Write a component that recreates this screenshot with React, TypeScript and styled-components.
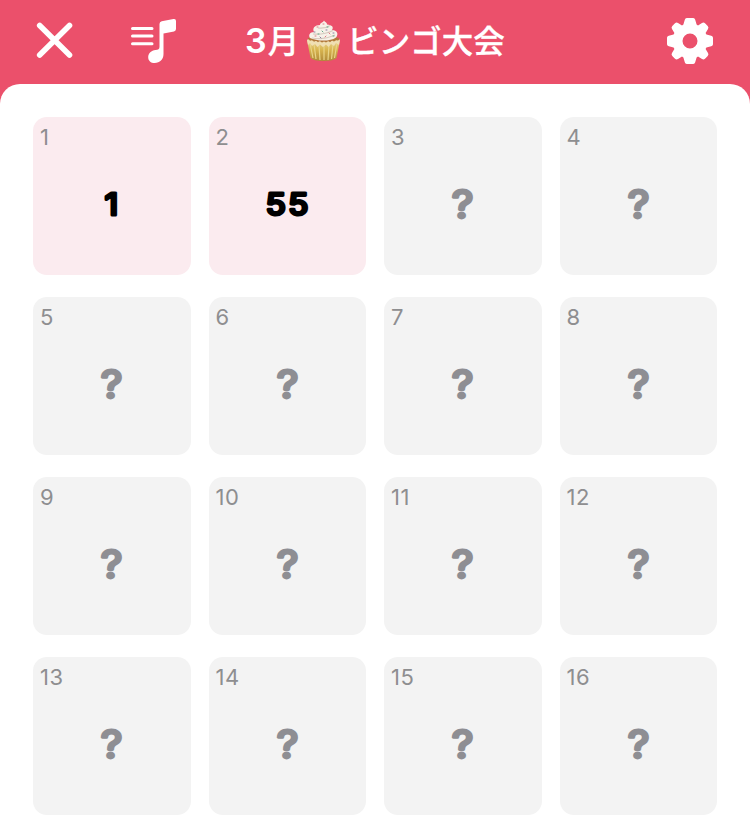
import React from "react";
import styled, { createGlobalStyle } from "styled-components";

const GlobalStyle = createGlobalStyle`
  * { box-sizing: border-box; }
  body { margin: 0; background: #fff; font-family: Inter, "Noto Sans CJK JP", sans-serif; }
`;
const Screen = styled.main`
  height: 837px;
  overflow: hidden;
  background: #eb506b;
`;
const Header = styled.header`
  height: 84px;
  padding: 0 36px 2px 34px;
  display: grid;
  grid-template-columns: 42px 46px 1fr 48px;
  column-gap: 54px;
  align-items: center;
`;
const IconButton = styled.button`
  display: flex;
  border: 0;
  padding: 0;
  background: none;
  color: #fff;
`;
const Title = styled.h1`
  margin: 0 0 0 15px;
  display: flex;
  align-items: center;
  height: 48px;
  color: #fff;
  font-weight: 600;
  line-height: 48px;
  white-space: nowrap;
`;
const Latin = styled.span`
  font-size: 34px;
  font-weight: 600;
  margin-right: 1px;
`;
const Kana = styled.span`
  padding-top: 1px;
  font-size: 31.5px;
  font-weight: 500;
  -webkit-text-stroke: 0.3px currentColor;
`;
const Cupcake = styled.svg`
  flex: none;
  margin: 0 6px 1px 7px;
`;
const Sheet = styled.section`
  height: 753px;
  padding: 33px;
  border-radius: 20px 20px 0 0;
  background: #fff;
`;
const Grid = styled.div`
  display: grid;
  grid-template-columns: repeat(4, 157.5px);
  grid-auto-rows: 158px;
  gap: 22px 18px;
`;
const Cell = styled.div<{ $drawn: boolean }>`
  display: grid;
  grid-template-rows: 40px 94px 24px;
  border-radius: 14px;
  background: ${(p) => (p.$drawn ? "#fbebef" : "#f3f3f3")};
`;
const Order = styled.span`
  padding: 6px 0 0 7px;
  color: #8e8e90;
  font-size: 22px;
  letter-spacing: 0.5px;
  line-height: 28px;
`;
const RoundedValue = styled.svg<{ $drawn: boolean }>`
  width: 100%;
  height: 94px;
  fill: ${(p) => (p.$drawn ? "#000" : "#8e8e93")};
  stroke: ${(p) => (p.$drawn ? "#000" : "#8e8e93")};
  stroke-width: ${(p) => (p.$drawn ? 3.2 : 3)}px;
  stroke-linejoin: round;
  font-size: ${(p) => (p.$drawn ? 29.5 : 38.5)}px;
  font-weight: 400;
  text-anchor: middle;
`;

const CloseIcon = () => (
  <svg width="42" height="42" viewBox="34 20 42 42" fill="none" stroke="#fff" strokeWidth="5.6" strokeLinecap="round">
    <path d="M39.7 25.5 69.5 55M69.5 25.5 39.7 55" />
  </svg>
);
const MusicIcon = () => (
  <svg width="46" height="46" viewBox="130 18 46 46" fill="#fff">
    <path d="M132.5 28.5H152M132.5 36H152M132.5 43.8H152" stroke="#fff" strokeWidth="3" strokeLinecap="round" />
    <path d="M159.5 24Q159.5 21.7 161.7 21.2L173.5 19.1Q176 18.7 176 21V29Q176 31 174 31.4L163.5 33.4V54C163.5 59.5 159.8 63 154.7 63C150.8 63 148.2 60.7 148.2 57.2C148.2 53 151.4 50.6 155.5 50C158.3 49.6 159.5 49.1 159.5 46.7Z" />
  </svg>
);
const GearIcon = () => (
  <svg width="48" height="48" viewBox="-24 -24 48 48" fill="#fff">
    <path
      fillRule="evenodd"
      d="M-3.2-23H3.2Q4.8-23 5.2-21.2L6.6-16.4 8-15.6 12-18Q13.7-19 15-17.7L17.7-15Q19-13.7 18-12L15.6-8 16.4-6.6 21.2-5.2Q23-4.8 23-3.2V3.2Q23 4.8 21.2 5.2L16.4 6.6 15.6 8 18 12Q19 13.7 17.7 15L15 17.7Q13.7 19 12 18L8 15.6 6.6 16.4 5.2 21.2Q4.8 23 3.2 23H-3.2Q-4.8 23-5.2 21.2L-6.6 16.4-8 15.6-12 18Q-13.7 19-15 17.7L-17.7 15Q-19 13.7-18 12L-15.6 8-16.4 6.6-21.2 5.2Q-23 4.8-23 3.2V-3.2Q-23-4.8-21.2-5.2L-16.4-6.6-15.6-8-18-12Q-19-13.7-17.7-15L-15-17.7Q-13.7-19-12-18L-8-15.6-6.6-16.4-5.2-21.2Q-4.8-23-3.2-23ZM0-7.5A7.5 7.5 0 1 0 0 7.5A7.5 7.5 0 1 0 0-7.5Z"
    />
  </svg>
);
const CupcakeIcon = () => (
  <Cupcake width="35" height="42" viewBox="0 0 35 42">
    <defs>
      <linearGradient id="cup" x2="0" y2="1">
        <stop stopColor="#e9d59b" />
        <stop offset=".45" stopColor="#d9b650" />
        <stop offset="1" stopColor="#b08a3a" />
      </linearGradient>
    </defs>
    <path d="M2 18Q17 13 33 18L32 24H3Z" fill="#b2793c" />
    <path d="M1 20Q17 25 34 20L30.5 38Q28 41 17.5 41T4.5 38Z" fill="url(#cup)" />
    <path d="M4 23 7 38M8 24 10 39M13 25 14 40M18 25V40M23 25 22 40M27 24 25.5 39M31 23 28.5 38" stroke="#e9d487" strokeWidth="1.2" />
    <path d="M1 20Q2.5 18 4 21Q6 19 8 22Q10 20 12 22.5Q14 20 16 23Q18 20 20 23Q22 20 24 22.5Q26 19.5 28 22Q30 19 32 21L34 19 33 25 30 23 28 26 25 24 22.5 27 20 24.5 17 27 14 24.5 11.5 27 9 24 6 26 4 23 2 25Z" fill="#f0dfb3" />
    <path d="M18 0.5C19 2.5 21 2 21 4.5C26 5 28 7 26 10C31 10 33 14 30 17.5C24 22 10 21 4 18C2 15 4 12 8 12C6 8 9 5 14 5C14 2.5 17 3 18 .5Z" fill="#f7f2e9" />
    <path d="M12 8Q19 9 24 5.5M7 14Q18 15 27 10.5M6 18Q18 20 29 15" fill="none" stroke="#d8cbc0" strokeWidth="1.2" />
    <g strokeWidth="1" strokeLinecap="round">
      <path d="m11 7 1 0M23 13l1 1M9 16h1M19 17l1-1M17 4h1" stroke="#e27883" />
      <path d="m16 11 1 1M27 16h1M12 14h1M21 7h1" stroke="#61a788" />
      <path d="m20 10 1 0M14 17l1 1M8 12h1M27 13h1" stroke="#8a7ba1" />
    </g>
  </Cupcake>
);

/** Heavy numeral with rounded corners, produced by a round-joined outline. */
const Value = ({ value }: { value?: number }) => {
  const drawn = value !== undefined;
  return (
    <RoundedValue $drawn={drawn} viewBox="-79 0 158 94">
      <text
        y={drawn ? 58 : 61}
        transform={drawn ? "scale(1.12 1)" : "scale(1.1 1)"}
        letterSpacing={drawn && value > 9 ? 2.2 : 0}
        dx={drawn && value > 9 ? 0.4 : -0.3}
      >
        {value ?? "?"}
      </text>
    </RoundedValue>
  );
};

const drawnNumbers = [1, 55];
const cells = Array.from({ length: 16 }, (_, i) => ({ order: i + 1, value: drawnNumbers[i] }));

export default function App() {
  return (
    <>
      <GlobalStyle />
      <Screen>
        <Header>
          <IconButton aria-label="閉じる"><CloseIcon /></IconButton>
          <IconButton aria-label="音楽"><MusicIcon /></IconButton>
          <Title>
            <Latin>3</Latin>
            <Kana>月</Kana>
            <CupcakeIcon />
            <Kana>ビンゴ大会</Kana>
          </Title>
          <IconButton aria-label="設定"><GearIcon /></IconButton>
        </Header>
        <Sheet>
          <Grid>
            {cells.map(({ order, value }) => (
              <Cell key={order} $drawn={value !== undefined}>
                <Order>{order}</Order>
                <Value value={value} />
              </Cell>
            ))}
          </Grid>
        </Sheet>
      </Screen>
    </>
  );
}
